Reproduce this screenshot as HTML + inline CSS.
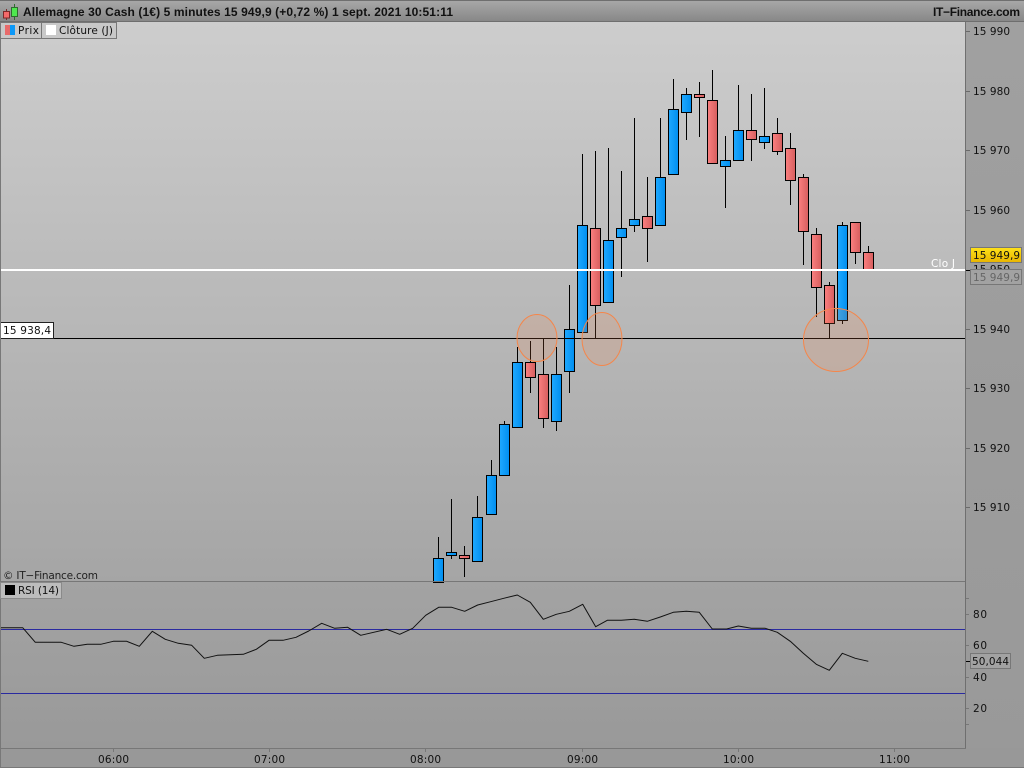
<!DOCTYPE html>
<html><head><meta charset="utf-8"><title>Allemagne 30 Cash</title>
<style>html,body{margin:0;padding:0;background:#989898}svg{display:block}text{font-family:"DejaVu Sans",sans-serif;font-size:10.5px;fill:#111}text.bd{font-family:"Liberation Sans",sans-serif;font-size:12px;font-weight:bold}</style></head>
<body>
<svg width="1024" height="768" viewBox="0 0 1024 768" xmlns="http://www.w3.org/2000/svg">
<defs>
<linearGradient id="bar" x1="0" y1="0" x2="0" y2="1"><stop offset="0" stop-color="#a9a9a9"/><stop offset="1" stop-color="#868686"/></linearGradient>
<linearGradient id="pp" x1="0" y1="0" x2="0" y2="1"><stop offset="0" stop-color="#cdcdcd"/><stop offset="1" stop-color="#a5a5a5"/></linearGradient>
<linearGradient id="rp" x1="0" y1="0" x2="0" y2="1"><stop offset="0" stop-color="#a3a3a3"/><stop offset="1" stop-color="#999999"/></linearGradient>
<linearGradient id="ax" x1="0" y1="0" x2="0" y2="1"><stop offset="0" stop-color="#a0a0a0"/><stop offset="1" stop-color="#999999"/></linearGradient>
<linearGradient id="r" x1="0" y1="0" x2="1" y2="0"><stop offset="0" stop-color="#fb8080"/><stop offset="1" stop-color="#d65e5e"/></linearGradient>
<linearGradient id="b" x1="0" y1="0" x2="1" y2="0"><stop offset="0" stop-color="#1fa9ff"/><stop offset="1" stop-color="#008ef0"/></linearGradient>
<linearGradient id="y" x1="0" y1="0" x2="0" y2="1"><stop offset="0" stop-color="#ffe21a"/><stop offset="1" stop-color="#e8b400"/></linearGradient>
</defs>

<rect x="0" y="0" width="1024" height="768" fill="#989898"/>
<rect x="0" y="22" width="966" height="560" fill="url(#pp)"/>
<rect x="966" y="22" width="58" height="726" fill="url(#ax)"/>
<rect x="0" y="582" width="966" height="166" fill="url(#rp)"/>

<!-- candles: wicks -->
<path stroke="#000" stroke-width="1" fill="none" d="M438.5 537V558M451.5 499V559M464.5 546V577M477.5 496V517M491.5 460V475M504.5 421V424M517.5 347V362M530.5 341V393M543.5 338V428M556.5 347V431M569.5 285V393M582.5 154V333M595.5 151V338M608.5 148V303M621.5 171V277M634.5 118V232M647.5 177V262M660.5 118V225M673.5 79V109M686.5 88V140M699.5 82V137M712.5 70V100M725.5 136V208M738.5 85V130M751.5 94V161M764.5 88V149M777.5 118V155M790.5 133V205M803.5 174V265M816.5 228V317M829.5 282V338M842.5 222V324M855.5 222V264M868.5 246V252"/>
<!-- candles: bodies -->
<g stroke="#000" stroke-width="1">
<rect x="433.5" y="558.5" width="10" height="24" fill="url(#b)"/>
<rect x="446.5" y="552.5" width="10" height="3" fill="url(#b)"/>
<rect x="459.5" y="555.5" width="10" height="3" fill="url(#r)"/>
<rect x="472.5" y="517.5" width="10" height="44" fill="url(#b)"/>
<rect x="486.5" y="475.5" width="10" height="39" fill="url(#b)"/>
<rect x="499.5" y="424.5" width="10" height="51" fill="url(#b)"/>
<rect x="512.5" y="362.5" width="10" height="65" fill="url(#b)"/>
<rect x="525.5" y="362.5" width="10" height="15" fill="url(#r)"/>
<rect x="538.5" y="374.5" width="10" height="44" fill="url(#r)"/>
<rect x="551.5" y="374.5" width="10" height="47" fill="url(#b)"/>
<rect x="564.5" y="329.5" width="10" height="42" fill="url(#b)"/>
<rect x="577.5" y="225.5" width="10" height="107" fill="url(#b)"/>
<rect x="590.5" y="228.5" width="10" height="77" fill="url(#r)"/>
<rect x="603.5" y="240.5" width="10" height="62" fill="url(#b)"/>
<rect x="616.5" y="228.5" width="10" height="9" fill="url(#b)"/>
<rect x="629.5" y="219.5" width="10" height="6" fill="url(#b)"/>
<rect x="642.5" y="216.5" width="10" height="12" fill="url(#r)"/>
<rect x="655.5" y="177.5" width="10" height="48" fill="url(#b)"/>
<rect x="668.5" y="109.5" width="10" height="65" fill="url(#b)"/>
<rect x="681.5" y="94.5" width="10" height="18" fill="url(#b)"/>
<rect x="694.5" y="94.5" width="10" height="3" fill="url(#r)"/>
<rect x="707.5" y="100.5" width="10" height="63" fill="url(#r)"/>
<rect x="720.5" y="160.5" width="10" height="6" fill="url(#b)"/>
<rect x="733.5" y="130.5" width="10" height="30" fill="url(#b)"/>
<rect x="746.5" y="130.5" width="10" height="9" fill="url(#r)"/>
<rect x="759.5" y="136.5" width="10" height="6" fill="url(#b)"/>
<rect x="772.5" y="133.5" width="10" height="18" fill="url(#r)"/>
<rect x="785.5" y="148.5" width="10" height="32" fill="url(#r)"/>
<rect x="798.5" y="177.5" width="10" height="54" fill="url(#r)"/>
<rect x="811.5" y="234.5" width="10" height="53" fill="url(#r)"/>
<rect x="824.5" y="285.5" width="10" height="38" fill="url(#r)"/>
<rect x="837.5" y="225.5" width="10" height="95" fill="url(#b)"/>
<rect x="850.5" y="222.5" width="10" height="30" fill="url(#r)"/>
<rect x="863.5" y="252.5" width="10" height="17" fill="url(#r)"/>
</g>

<!-- horizontal lines -->
<rect x="0" y="338" width="966" height="1" fill="#000"/>
<rect x="0" y="269" width="966" height="2" fill="#fff"/>

<!-- ellipses -->
<g fill="#ff8a4a" fill-opacity=".16" stroke="#f5864a" stroke-width="1">
<ellipse cx="537" cy="338" rx="20" ry="23.5"/>
<ellipse cx="602" cy="339" rx="20" ry="26.5"/>
<ellipse cx="836" cy="340" rx="32.5" ry="31.5"/>
</g>

<!-- top bar -->
<rect x="0" y="0" width="1024" height="22" fill="url(#bar)"/>
<rect x="0" y="0" width="1024" height="1" fill="#6f6f6f"/>
<rect x="0" y="21" width="1024" height="1" fill="#6e6e6e"/>
<path d="M6.5 9V20M14.5 4V20" stroke="#2f6b2f" stroke-width="1"/>
<path d="M6.5 9V20" stroke="#7a2a2a" stroke-width="1"/>
<rect x="3.5" y="11.5" width="6" height="6.5" fill="#f46a6a" stroke="#7a2a2a"/>
<rect x="11.5" y="7.5" width="6" height="9" fill="#4ee84e" stroke="#2f6b2f"/>
<text class="bd" x="23" y="16" textLength="430" lengthAdjust="spacing">Allemagne 30 Cash (1€) 5 minutes 15 949,9 (+0,72 %) 1 sept. 2021 10:51:11</text>
<text class="bd" x="933" y="16" textLength="87" lengthAdjust="spacing">IT−Finance.com</text>

<!-- legend -->
<rect x="0.5" y="22.5" width="41" height="16" fill="#c8c8c8" stroke="#777"/>
<rect x="5" y="25" width="5" height="10" fill="#e86a6a"/><rect x="10" y="25" width="5" height="10" fill="#0c98f8"/>
<text x="18" y="34" textLength="21" lengthAdjust="spacing">Prix</text>
<rect x="41.5" y="22.5" width="75" height="16" fill="#c8c8c8" stroke="#777"/>
<rect x="46" y="25" width="10" height="10" fill="#fff"/>
<text x="59" y="34" textLength="54" lengthAdjust="spacing">Clôture (J)</text>

<!-- price axis -->
<path stroke="#6a6a6a" stroke-width="1" d="M966 31.5h4M966 91.5h4M966 150.5h4M966 210.5h4M966 329.5h4M966 388.5h4M966 448.5h4M966 507.5h4"/>
<path stroke="#000" stroke-width="1" d="M966 270.5h4"/>
<g>
<text x="973" y="35" textLength="37" lengthAdjust="spacing">15 990</text>
<text x="973" y="95" textLength="37" lengthAdjust="spacing">15 980</text>
<text x="973" y="154" textLength="37" lengthAdjust="spacing">15 970</text>
<text x="973" y="214" textLength="37" lengthAdjust="spacing">15 960</text>
<text x="973" y="273" textLength="37" lengthAdjust="spacing">15 950</text>
<text x="973" y="333" textLength="37" lengthAdjust="spacing">15 940</text>
<text x="973" y="392" textLength="37" lengthAdjust="spacing">15 930</text>
<text x="973" y="452" textLength="37" lengthAdjust="spacing">15 920</text>
<text x="973" y="511" textLength="37" lengthAdjust="spacing">15 910</text>
</g>
<rect x="970.5" y="269.5" width="51" height="15" fill="#a2a2a2" stroke="#777"/>
<text x="973" y="281" textLength="47" lengthAdjust="spacing" style="fill:#666">15 949,9</text>
<rect x="970.5" y="247.5" width="51" height="15" fill="url(#y)" stroke="#777"/>
<text x="973" y="259" textLength="47" lengthAdjust="spacing">15 949,9</text>
<text x="931" y="267" textLength="24" lengthAdjust="spacing" style="fill:#fff">Clo J</text>

<!-- price flag -->
<rect x="0.5" y="322.5" width="53" height="16" fill="#fff" stroke="#222"/>
<text x="3" y="334" textLength="48" lengthAdjust="spacing">15 938,4</text>

<text x="3" y="579" textLength="95" lengthAdjust="spacing" style="fill:#222">© IT−Finance.com</text>

<!-- panel separator -->
<rect x="0" y="581" width="966" height="1" fill="#777"/>
<rect x="965" y="22" width="1" height="726" fill="#6f6f6f"/>
<rect x="0" y="22" width="1" height="746" fill="#787878"/>

<!-- RSI -->
<rect x="0.5" y="582.5" width="61" height="16" fill="#bcbcbc" stroke="#8a8a8a"/>
<rect x="5" y="585" width="10" height="10" fill="#000"/>
<text x="18" y="594" textLength="41" lengthAdjust="spacing">RSI (14)</text>
<rect x="1" y="629" width="964" height="1" fill="#2a2aa0"/>
<rect x="1" y="693" width="964" height="1" fill="#2a2aa0"/>
<polyline fill="none" stroke="#111" stroke-width="1" stroke-linejoin="round" points="1,627.7 22.7,627.7 35.3,642.3 61.3,642.3 74,646.3 87.3,644.3 100.7,644.3 113.3,641.3 126.7,641.3 139.3,646.3 152.3,631.3 165.3,639.3 178.3,643.3 191.7,645.3 204.3,658.3 217.3,655.3 243.3,654.3 256.3,649.3 269,640.3 283,640.3 296,637.3 308.7,631 321.7,623.3 334.7,628.3 347.7,627.3 360.7,635.3 386.7,629.3 399.7,634.3 412.7,628.3 425.7,615.3 438.7,607.3 451.7,607.3 464.7,611.3 477.7,605 490.7,601.7 503.7,598.3 517.3,595 530.3,602.3 543.3,619.3 556.3,614.3 569.3,611.3 582.7,604.3 595.7,626.7 607.3,620.3 621.3,620.3 634.3,619.3 647.3,621.3 660.3,617 673.3,612.3 686.3,611.3 699.3,612.3 712.3,629 726.7,629 738.3,626 751.3,628.3 765.3,628.3 777.3,632.3 790.3,641.3 803.3,653.3 816.3,664.3 829.3,670.3 842.3,653.3 855.3,658.3 868.3,661.3"/>

<!-- RSI axis -->
<path stroke="#777" stroke-width="1" d="M966 598.5h3M966 614.5h3M966 645.5h3M966 677.5h3M966 708.5h3M966 724.5h3"/>
<path stroke="#000" stroke-width="1" d="M966 661.5h4"/>
<text x="973" y="618" textLength="14" lengthAdjust="spacing">80</text>
<text x="973" y="649" textLength="14" lengthAdjust="spacing">60</text>
<text x="973" y="681" textLength="14" lengthAdjust="spacing">40</text>
<text x="973" y="712" textLength="14" lengthAdjust="spacing">20</text>
<rect x="970.5" y="653.5" width="40" height="15" fill="#a2a2a2" stroke="#777"/>
<text x="972" y="665" textLength="37" lengthAdjust="spacing">50,044</text>

<!-- time axis -->
<rect x="0" y="748" width="966" height="1" fill="#777"/>
<rect x="0" y="767" width="1024" height="1" fill="#787878"/>
<path stroke="#777" stroke-width="1" d="M113.5 749v3M269.5 749v3M425.5 749v3M582.5 749v3M738.5 749v3M894.5 749v3"/>
<text x="98" y="763" textLength="31" lengthAdjust="spacing">06:00</text>
<text x="254" y="763" textLength="31" lengthAdjust="spacing">07:00</text>
<text x="410" y="763" textLength="31" lengthAdjust="spacing">08:00</text>
<text x="567" y="763" textLength="31" lengthAdjust="spacing">09:00</text>
<text x="723" y="763" textLength="31" lengthAdjust="spacing">10:00</text>
<text x="879" y="763" textLength="31" lengthAdjust="spacing">11:00</text>
</svg>
</body></html>
